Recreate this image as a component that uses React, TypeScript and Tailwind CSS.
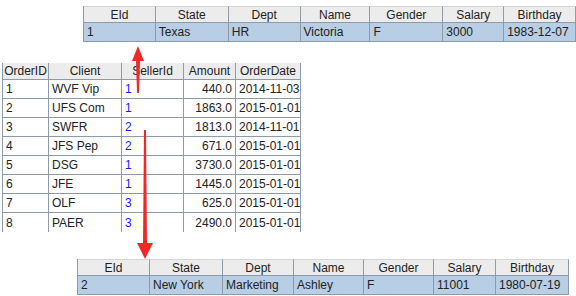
const empCols = ["EId", "State", "Dept", "Name", "Gender", "Salary", "Birthday"];

type Emp = string[];

const emp1: Emp = ["1", "Texas", "HR", "Victoria", "F", "3000", "1983-12-07"];
const emp2: Emp = ["2", "New York", "Marketing", "Ashley", "F", "11001", "1980-07-19"];

const orders = [
  ["1", "WVF Vip", "1", "440.0", "2014-11-03"],
  ["2", "UFS Com", "1", "1863.0", "2015-01-01"],
  ["3", "SWFR", "2", "1813.0", "2014-11-01"],
  ["4", "JFS Pep", "2", "671.0", "2015-01-01"],
  ["5", "DSG", "1", "3730.0", "2015-01-01"],
  ["6", "JFE", "1", "1445.0", "2015-01-01"],
  ["7", "OLF", "3", "625.0", "2015-01-01"],
  ["8", "PAER", "3", "2490.0", "2015-01-01"],
];

function EmpTable(props: { row: Emp; widths: number[] }) {
  return (
    <div className="flex flex-col border-l border-[#8e9aaa]">
      <div className="flex h-[17px]">
        {empCols.map((c, i) => (
          <div
            key={c}
            style={{ width: props.widths[i] }}
            className="flex items-center justify-center whitespace-nowrap border-r border-b border-t border-t-[#d6d6d6] border-[#8e9aaa] bg-[#ececec] leading-none"
          >
            {c}
          </div>
        ))}
      </div>
      <div className="flex h-[19px]">
        {props.row.map((v, i) => (
          <div
            key={i}
            style={{ width: props.widths[i] }}
            className="flex items-center whitespace-nowrap border-r border-b border-[#8e9aaa] bg-[#b8cee4] pl-[3px] leading-none"
          >
            {v}
          </div>
        ))}
      </div>
    </div>
  );
}

function OrderTable() {
  const widths = [46, 73, 62, 52, 65];
  const heads = ["OrderID", "Client", "SellerId", "Amount", "OrderDate"];
  return (
    <div className="flex flex-col border-l border-[#8e9aaa]">
      <div className="flex h-[17px]">
        {heads.map((h, i) => (
          <div
            key={h}
            style={{ width: widths[i] }}
            className="flex items-center justify-center whitespace-nowrap border-r border-b border-[#8e9aaa] bg-[#ececec] leading-none"
          >
            {h}
          </div>
        ))}
      </div>
      {orders.map((r, ri) => (
        <div key={ri} className="flex h-[19px]">
          {r.map((v, i) => (
            <div
              key={i}
              style={{ width: widths[i] }}
              className={`flex items-center whitespace-nowrap border-r border-[#8e9aaa] leading-none ${
                ri < orders.length - 1 ? "border-b" : ""
              } ${i === 3 ? "justify-end pr-[3px]" : "pl-[3px]"} ${
                i === 2 ? "text-[#1a1aff]" : ""
              }`}
            >
              {v}
            </div>
          ))}
        </div>
      ))}
    </div>
  );
}

export default function App() {
  return (
    <div className="relative w-[576px] h-[296px] overflow-hidden bg-white text-[12px] text-[#222] font-['Liberation_Sans',Arial,sans-serif]">
      <div className="flex flex-col">
        <div className="ml-[83px] mt-[6px]">
          <EmpTable row={emp1} widths={[72, 73, 72, 70, 73, 61, 72]} />
        </div>
        <div className="ml-[2px] mt-[21px]">
          <OrderTable />
        </div>
        <div className="ml-[77px] mt-[27px]">
          <EmpTable row={emp2} widths={[72, 73, 71, 70, 70, 62, 73]} />
        </div>
      </div>
      <svg className="absolute left-0 top-0" width="576" height="296">
        <polygon points="137,93 139,93 140,60 136,60" fill="#f02828" />
        <polygon points="132,61 144,61 138,46" fill="#f02828" />
        <polygon points="144,130 146,130 147,244 143,244" fill="#f02828" />
        <polygon points="137,243 153,243 145,259" fill="#f02828" />
      </svg>
    </div>
  );
}
